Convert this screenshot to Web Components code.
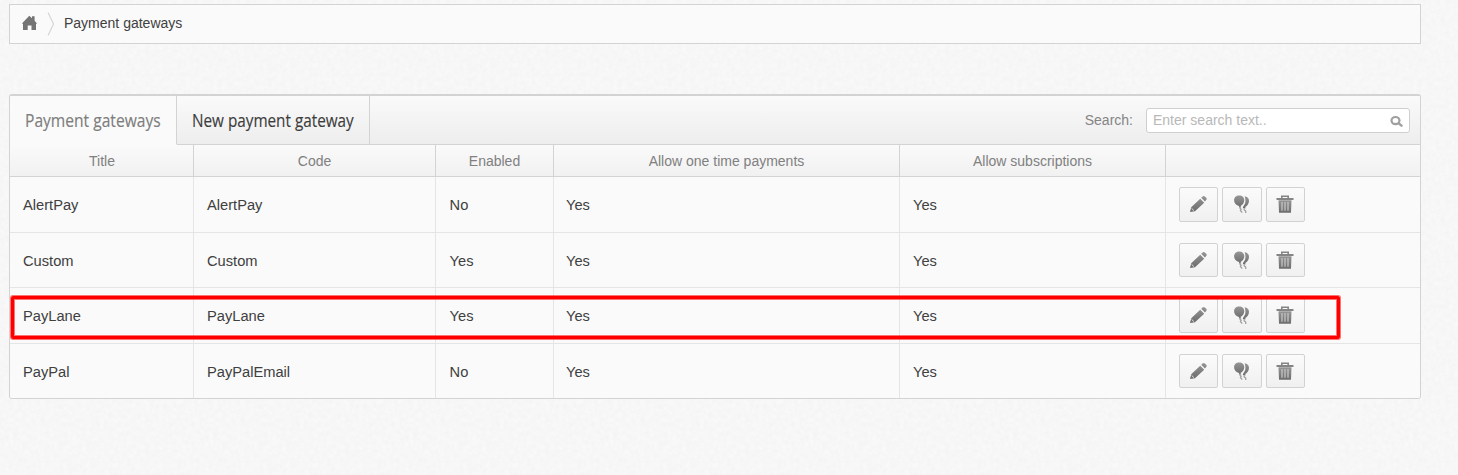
<!DOCTYPE html>
<html lang="en"><head><meta charset="utf-8"><title>Payment gateways</title>
<style>
html,body{margin:0;height:100%}
body{overflow:hidden;font-family:"Liberation Sans",Arial,sans-serif;background:#f6f6f6 url("data:image/svg+xml,%3Csvg xmlns='http://www.w3.org/2000/svg' width='200' height='200'%3E%3Cfilter id='n' x='0' y='0' width='1' height='1' color-interpolation-filters='sRGB'%3E%3CfeTurbulence type='fractalNoise' baseFrequency='.22' numOctaves='3' seed='4' stitchTiles='stitch'/%3E%3CfeColorMatrix values='.03 0 0 0 .952 .03 0 0 0 .952 .03 0 0 0 .952 0 0 0 0 1'/%3E%3C/filter%3E%3Crect width='200' height='200' filter='url(%23n)'/%3E%3C/svg%3E")}
</style></head><body>
<gateway-page></gateway-page>
<script>
const define=(name,html)=>customElements.define(name,class extends HTMLElement{
  constructor(){super();const t=document.createElement('template');t.innerHTML=html;this.attachShadow({mode:'open'}).append(t.content.cloneNode(true));}
});

define('crumb-bar',`<style>
:host{display:flex;align-items:center;box-sizing:border-box;height:40px;border:1px solid #d3d3d3;background:#fafafa;font-size:14px;color:#404040;padding-left:12px}
.home{width:15px;height:15px;margin-top:-4px}.sep{width:8px;height:24px;margin:0 8px 0 10px}
span{line-height:18px;margin-top:-2px;padding-left:1px}
</style>
<svg class="home" viewBox="0 0 15 15"><path fill="#747474" d="M7.3.7 10 3.3V1.2h2.6v4.6L14.6 8v1.1h-.6V15H9.5v-4.6H5.7V15H1V9.1H.4V8z"/></svg>
<svg class="sep" viewBox="0 0 8 24"><path d="M1 .5 6.5 12 1 23.5" fill="none" stroke="#d6d6d6" stroke-width="1.2"/></svg>
<span><slot></slot></span>`);

define('tab-item',`<style>
:host{display:flex;align-items:center;box-sizing:border-box;width:193px;height:49px;padding-left:15px;border-right:1px solid #d3d3d3;border-bottom:1px solid #d3d3d3;color:#3c3c3c;--sx:.826}
:host([active]){width:167px;background:#fafafa;border-bottom-color:#fafafa;color:#7d7d7d;--sx:.843}
span{font:18.5px/24px "Open Sans","Noto Sans",sans-serif;white-space:nowrap;transform:scaleX(var(--sx));transform-origin:0 50%;width:0;-webkit-text-stroke:.15px}
</style><span><slot></slot></span>`);

define('search-box',`<style>
:host{display:flex;align-items:center;margin-left:auto;padding-right:10px;font-size:14px;color:#858585}
.label{margin-right:13px;line-height:18px;margin-top:-2px}
.box{display:flex;align-items:center;justify-content:space-between;box-sizing:border-box;width:264px;height:25px;border:1px solid #cfcfcf;border-radius:3px;background:#fff;padding:0 6px;color:#b8b8b8}
.box span{line-height:18px;margin-top:-2px}svg{width:13px;height:13px;margin-top:2px}
</style><span class="label">Search:</span><div class="box"><span>Enter search text..</span>
<svg viewBox="0 0 13 13"><ellipse cx="5.5" cy="5.6" rx="4" ry="3.6" fill="none" stroke="#a0a0a0" stroke-width="2.2"/><path d="m8.8 8.3 2.7 2.4" stroke="#a0a0a0" stroke-width="2.4" stroke-linecap="round"/></svg></div>`);

const icons={
edit:'<path d="m1 17 1.2-4.7L11.2 3.7l4 4L6 16.3zM12.2 2.8l1.4-1.4c.8-.7 1.5-.7 2.2 0l1.4 1.4c.7.7.7 1.4 0 2.2l-1.3 1.6z" fill="url(#g)"/><path d="m2.6 13.4 2.3 2.2" stroke="#f2f2f2" stroke-width=".9"/>',
balloons:'<path d="M6.2.5c3.1 0 5.1 2 5.1 4.8 0 2.6-1.7 4.8-3.8 5.7l.8 1.4H5.9l.3-1.4C3.4 10.6 1.1 8 1.1 5.3c0-2.8 2-4.8 5.1-4.8z" fill="url(#g)"/><path d="M11.6 1.3c2.7.2 4.4 2 4.4 4.5 0 2.9-1.6 5.3-3.8 6.1l.5 1.3h-2.9l.5-1.9c2-2 3-4.8 1.3-10z" fill="url(#g)"/><path d="m6.7 12.8 1.4 1.6-.7 1 1.8 2.2M11.6 13.4l-.5 1.4 1.6 1.2v2" fill="none" stroke="#a0a0a0" stroke-width="1.3"/>',
trash:'<path d="M5 3V.5h8V3h4.5v2H.5V3zM6.6 3h4.8v-.9H6.6z" fill="#858585"/><path d="M2.5 5.3h13l-.5 12.4H3z" fill="url(#g)"/><path d="M6 7v8.7M9 7v8.7M12 7v8.7" stroke="#d0d0d0" stroke-width="1.1"/>'};
customElements.define('icon-button',class extends HTMLElement{
 connectedCallback(){this.attachShadow({mode:'open'}).innerHTML=`<style>
:host{display:flex;align-items:center;justify-content:center;box-sizing:border-box;width:39px;height:var(--button-height,35px);border:1px solid #d2d2d2;border-radius:2px;background:linear-gradient(#fbfbfb,#f0f0f0)}
:host([icon=balloons]){width:40px}svg{width:18px;height:18px;margin:0 1px 1px 0}</style>
<svg viewBox="0 0 18 18"><defs><linearGradient id="g" x2="0" y2="1"><stop stop-color="#969696"/><stop offset="1" stop-color="#6c6c6c"/></linearGradient></defs>${icons[this.getAttribute('icon')]}</svg>`;}
});

const grid='display:grid;grid-template-columns:184px 242px 118px 346px 266px 1fr;';
define('table-head',`<style>
:host{${grid}height:32px;box-sizing:border-box;border-bottom:1px solid #d3d3d3;background:linear-gradient(#fafafa,#f1f1f1);font-size:14px;color:#808080}
div{display:flex;align-items:center;justify-content:center;border-right:1px solid #d3d3d3;line-height:18px}
div:first-of-type{padding-left:1px}
div:last-child{border:0}
</style><div>Title</div><div>Code</div><div>Enabled</div><div>Allow one time payments</div><div>Allow subscriptions</div><div></div>`);

customElements.define('gateway-row',class extends HTMLElement{
 connectedCallback(){this.attachShadow({mode:'open'}).innerHTML=`<style>
:host{${grid}box-sizing:border-box;height:56px;border-bottom:1px solid #e5e5e5;background:#fafafa;font-size:14.67px;color:#404040;--text-top:0px}
:host([short]){height:55px;--text-top:2px;--button-height:34px}
:host(:last-child){height:54px;border-bottom:0;--text-top:2px;--button-height:34px}
div{display:flex;align-items:center;padding-left:13px;padding-top:var(--text-top);border-right:1px solid #e5e5e5;line-height:18px}
div:nth-of-type(3){padding-left:13.6px}
div:nth-of-type(4){padding-left:12px}
.actions{gap:4px;border:0;padding-top:0}
</style>${this.getAttribute('values').split('|').map(v=>`<div>${v}</div>`).join('')}
<div class="actions"><icon-button icon="edit"></icon-button><icon-button icon="balloons"></icon-button><icon-button icon="trash"></icon-button></div>`;}
});

define('gateway-panel',`<style>
:host{display:block;box-sizing:border-box;height:305px;border:1px solid #d3d3d3;border-top-width:2px;border-radius:3px;background:#fafafa;overflow:hidden}
.bar{display:flex;height:49px;background:linear-gradient(#fafafa,#ededed);box-shadow:inset 0 -1px #d3d3d3}
</style><div class="bar"><tab-item active>Payment gateways</tab-item><tab-item>New payment gateway</tab-item><search-box></search-box></div>
<table-head></table-head>
<section><gateway-row values="AlertPay|AlertPay|No|Yes|Yes"></gateway-row>
<gateway-row short values="Custom|Custom|Yes|Yes|Yes"></gateway-row>
<gateway-row values="PayLane|PayLane|Yes|Yes|Yes"></gateway-row>
<gateway-row values="PayPal|PayPalEmail|No|Yes|Yes"></gateway-row></section>`);

define('row-highlight',`<style>
:host{display:block;position:absolute;left:2px;top:202px;width:1329px;height:43px;box-sizing:border-box;border:3px solid #fe0000;border-radius:2px;box-shadow:0 0 0 1px #fe000088,inset 0 0 0 1px #fe000088}
</style>`);

define('gateway-page',`<style>
:host{display:flex;flex-direction:column;gap:50px;width:1412px;padding:4px 0 0 9px}
.wrap{position:relative}
</style><crumb-bar>Payment gateways</crumb-bar><div class="wrap"><gateway-panel></gateway-panel><row-highlight></row-highlight></div>`);
</script></body></html>
